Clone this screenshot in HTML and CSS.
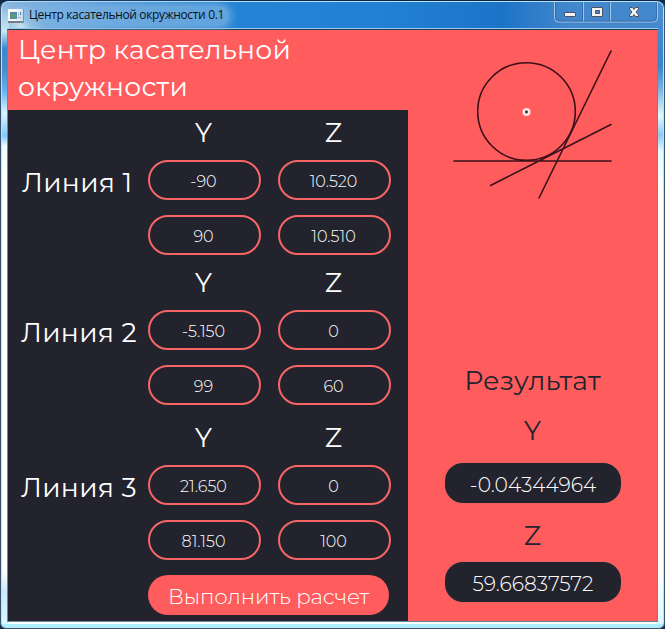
FILE: index.html
```html
<!DOCTYPE html>
<html lang="ru">
<head>
<meta charset="utf-8">
<title>Центр касательной окружности 0.1</title>
<link rel="stylesheet" href="styles.css">
</head>
<body>
<div class="window">
  <header class="titlebar">
    <svg class="app-icon" width="16" height="14" viewBox="0 0 16 14">
      <path fill="#777c80" d="M0 0h16v14H0z"/><path fill="#f7f7f5" d="M0 0h15v12H0z"/>
      <path fill="#5685a5" d="M2 3h7v7H2z"/><path fill="#55a06d" d="M3 5h5v4H3z"/>
      <path fill="#bccbd2" d="M10 3h1v7h-1z"/><path fill="#3c70bd" d="M12 3h1v3h-1z"/><path fill="#b0b0b0" d="M11 8h2v1h-2z"/>
    </svg>
    <span class="caption"><span class="caption-text">Центр касательной окружности 0.1</span></span>
    <div class="controls">
      <svg width="104" height="21" viewBox="0 0 104 21">
        <path d="M.5 0v16q0 4 4 4h95q4 0 4-4V0M29.500 0v20M56.500 0v20" fill="none" stroke="#9fc4e5"/>
        <path d="M1.500 0v15q0 4 4 4h93q4 0 4-4V0M28.500 0v19M55.500 0v19" fill="none" stroke="#315f99" stroke-opacity=".65"/>
        <rect x="10.500" y="10.500" width="11" height="4" rx=".5" fill="#f3f3f3" stroke="#4f5265"/>
        <path d="M37.500 5.500h11v9h-11zM41.500 8.500v3h4v-3z" fill="#f3f3f3" fill-rule="evenodd" stroke="#4f5265"/>
        <path d="M75.500 5.500h3l1.500 2 1.500-2h3v1.500l-2.500 3 2.500 3v1.500h-3l-1.500-2-1.500 2h-3v-1.500l2.500-3-2.500-3z" fill="#f3f3f3" stroke="#4f5265"/>
      </svg>
    </div>
  </header>
  <main class="client">
    <section class="inputs">
      <h1 class="heading">Центр касательной<br>окружности</h1>
      <div class="group">
        <span class="axis axis-y">Y</span><span class="axis axis-z">Z</span>
        <span class="line-label first">Линия 1</span>
        <div class="fields">
          <span class="field">-90</span><span class="field">10.520</span>
          <span class="field">90</span><span class="field">10.510</span>
        </div>
      </div>
      <div class="group">
        <span class="axis axis-y">Y</span><span class="axis axis-z">Z</span>
        <span class="line-label">Линия 2</span>
        <div class="fields">
          <span class="field">-5.150</span><span class="field">0</span>
          <span class="field">99</span><span class="field">60</span>
        </div>
      </div>
      <div class="group last">
        <span class="axis axis-y">Y</span><span class="axis axis-z">Z</span>
        <span class="line-label">Линия 3</span>
        <div class="fields">
          <span class="field">21.650</span><span class="field">0</span>
          <span class="field">81.150</span><span class="field">100</span>
        </div>
      </div>
      <button class="calculate">Выполнить расчет</button>
    </section>
    <aside class="results">
      <svg class="diagram" width="249" height="190" viewBox="408 30 249 190">
        <g fill="none" stroke="#3b1018" stroke-width="1.600" stroke-linecap="round">
          <circle cx="526.500" cy="111.500" r="48.800"/>
          <path d="M454 161h157M490.500 185.500 611 124.500M539 198 611 51"/>
        </g>
        <circle cx="526.500" cy="112" r="4" fill="#ffe4e4"/><circle cx="526.500" cy="112" r="1.400" fill="#292630"/>
      </svg>
      <h2 class="result-title">Результат</h2>
      <div class="result-axis">Y</div>
      <output class="value">-0.04344964</output>
      <div class="result-axis z">Z</div>
      <output class="value">59.66837572</output>
    </aside>
  </main>
</div>
</body>
</html>
```
FILE: styles.css
```css
* { box-sizing: border-box; }
body { margin: 0; background: #102947; font-family: Montserrat, Inter, sans-serif; }
.window {
  width: 665px; height: 629px; padding: 2px 6px 6px;
  border: 1px solid #38536b; border-top-color: #08254b; border-radius: 8px 8px 6px 6px;
  box-shadow: inset 0 0 0 1px #bce2f5;
  background:
    linear-gradient(#acefff, #acefff) 0 100% / 100% 4px no-repeat,
    linear-gradient(#4c91d3 0, #3984cc 65px, #6eaddf 85px, #dffaff 115px, #8ec7f4 134px, #dffcff 150px, #fff 190px, #fff 570px, #d4faff 100%) 100% 0 / 8px 100% no-repeat,
    linear-gradient(#7eb2df 0, #c8e8f3 30px, #3588d4 48px, #498fcd 70px, #62b5f5 90px, #d9f5ff 112px, #80caff 135px, #eefcff 145px, #fff 175px, #fff 570px, #c9eaff 590px, #dcfbff 100%) 0 0 / 8px 100% no-repeat,
    radial-gradient(ellipse 22px 20px at 22px 24px, #e2f6f0cc, transparent) 0 0 / 60px 30px no-repeat,
    linear-gradient(90deg, #8bb9e0 0, #4b96d6 120px, #2483d5 240px, #2281d4 380px, #1c74c8 500px, #4387cc 570px, #4387cc 100%) 0 0 / 100% 30px no-repeat,
    #fff;
}
.titlebar { display: flex; height: 26px; padding-left: 1px; }
.app-icon { margin-top: 6px; }
.caption { margin: 3px 0 0; height: 20px; padding: 0 5px; border-radius: 10px; background: #7cb3e2aa; box-shadow: 0 0 6px 3px #7cb3e2aa; font: 12px/18px "Open Sans", sans-serif; color: #07111c; white-space: nowrap; }
.caption-text { display: inline-block; letter-spacing: -.34px; }
.controls { margin: -1px 0 0 auto; height: 21px; }
.controls svg, .diagram { display: block; }
.client { display: grid; grid-template-columns: 400px 249px; width: 651px; height: 593px; border: 1px solid #6b8798; border-top-color: #1c3b58; box-shadow: 0 -1px #9fcbea; }
.inputs { background: #23232e; }
.heading { height: 80px; margin: 0; padding: 1px 0 0 10px; background: #ff5c5e; color: #fff; font-weight: 400; font-size: 26.67px; line-height: 37px; letter-spacing: .27px; white-space: nowrap; }
.group { display: grid; grid-template-columns: 140px 113px 113px; grid-template-rows: 50px 95px; column-gap: 0; height: 150px; color: #fff; }
.group.last { height: 165px; padding-top: 5px; }
.axis { font-size: 26.67px; line-height: 46px; text-align: center; }
.axis-y { grid-column: 2; padding-right: 2px; }
.axis-z { margin: 0 -16px 0 16px; }
.line-label { padding-left: 13px; line-height: 46px; font-size: 26.67px; letter-spacing: .3px; white-space: nowrap; }
.line-label.first { padding-left: 14px; }
.fields { grid-column: 2 / 4; display: grid; grid-template-columns: 113px 113px; grid-auto-rows: 40px; gap: 15px 17px; }
.field { border: 2px solid #f76565; border-radius: 20px; padding-right: 2px; font-size: 16px; font-weight: 350; line-height: 39px; text-align: center; }
.calculate { display: block; width: 241px; height: 40px; margin-left: 140px; padding: 3px 0 0; border: 0; border-radius: 20px; background: #ff5c5e; color: #fff; font: 300 21.33px/37px Montserrat, Inter, sans-serif; letter-spacing: -.1px; white-space: nowrap; }
.results { background: #ff5c5e; color: #23232e; }
.result-title { margin: 142px 0 0; height: 40px; font-size: 26.67px; font-weight: 400; line-height: 38px; letter-spacing: .2px; text-align: center; }
.result-axis { height: 61px; font-size: 26.67px; line-height: 57px; text-align: center; }
.value { display: block; width: 176px; height: 40px; margin-left: 37px; border-radius: 18px; background: #23232e; box-shadow: 0 0 0 1px #ef6263; color: #fff; font-size: 20.3px; font-weight: 300; line-height: 44px; text-align: center; }
.result-axis.z { height: 59px; line-height: 65px; }
```
